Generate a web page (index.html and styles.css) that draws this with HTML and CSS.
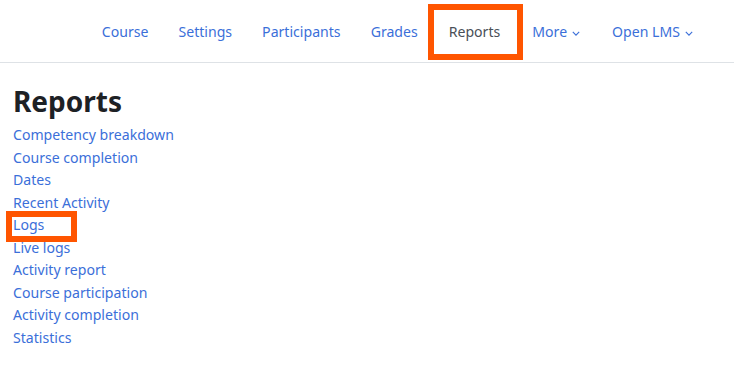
FILE: index.html
```html
<!DOCTYPE html>
<html lang="en">
<head>
  <meta charset="UTF-8">
  <meta name="viewport" content="width=device-width, initial-scale=1.0">
  <title>Reports</title>
  <link rel="stylesheet" href="styles.css">
</head>
<body>
  <div class="secondary-nav">
    <ul class="nav-list">
      <li><a href="#">Course</a></li>
      <li><a href="#">Settings</a></li>
      <li><a href="#">Participants</a></li>
      <li><a href="#">Grades</a></li>
      <li><a class="active marked" href="#">Reports</a></li>
      <li><a href="#">More <svg class="caret" viewBox="0 0 10 6"><path d="M1 1l4 4 4-4"/></svg></a></li>
      <li><a href="#">Open LMS <svg class="caret" viewBox="0 0 10 6"><path d="M1 1l4 4 4-4"/></svg></a></li>
    </ul>
  </div>

  <div class="main">
    <h2>Reports</h2>
    <ul class="report-list">
      <li><a href="#">Competency breakdown</a></li>
      <li><a href="#">Course completion</a></li>
      <li><a href="#">Dates</a></li>
      <li><a href="#">Recent Activity</a></li>
      <li><a class="marked-small" href="#">Logs</a></li>
      <li><a href="#">Live logs</a></li>
      <li><a href="#">Activity report</a></li>
      <li><a href="#">Course participation</a></li>
      <li><a href="#">Activity completion</a></li>
      <li><a href="#">Statistics</a></li>
    </ul>
  </div>
</body>
</html>
```

FILE: styles.css
```css
*,
*::after{
  margin:0;
  padding:0;
  box-sizing:border-box;
}
body{
  font-family:"Noto Sans","Open Sans",sans-serif;
  font-size:14.1px;
  color:#1d2125;
  background:#fff;
}
a{
  color:#3b6fd9;
  text-decoration:none;
}
ul{
  list-style:none;
}

/* top nav */
.secondary-nav{
  height:63px;
  border-bottom:1px solid #dee2e6;
  display:flex;
  justify-content:flex-end;
  padding-right:25px;
}
.nav-list{
  display:flex;
  align-items:center;
  padding-top:1px;
}
.nav-list li:nth-child(-n+4) a{
  padding:0 15px;
}
.nav-list a{
  position:relative;
  display:flex;
  align-items:center;
  gap:5px;
  height:44px;
  padding:0 16px;
}
.nav-list a.active{
  color:#495057;
}
.caret{
  width:8px;
  height:5px;
  margin-top:3px;
  fill:none;
  stroke:currentColor;
  stroke-width:1.4;
}

/* orange annotation boxes */
.marked::after,
.marked-small::after{
  content:"";
  position:absolute;
  border:6px solid #ff5500;
}
.marked::after{
  left:-5px;
  right:-7px;
  top:-6px;
  bottom:-6px;
}
.marked-small{
  position:relative;
}
.marked-small::after{
  left:-7px;
  top:-4px;
  width:71px;
  height:31px;
}

/* content */
.main{
  padding:20px 13px;
}
.main h2{
  font-size:28px;
  font-weight:700;
  line-height:36px;
  margin-bottom:5px;
}
.report-list li{
  line-height:22.5px;
}
```
